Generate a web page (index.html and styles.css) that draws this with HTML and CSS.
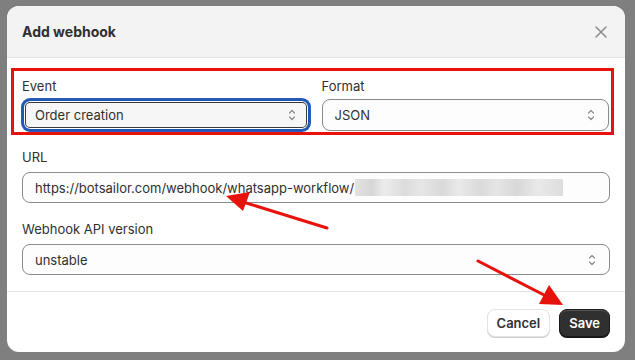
FILE: index.html
```html
<!DOCTYPE html>
<html lang="en">
<head>
    <meta charset="UTF-8">
    <meta name="viewport" content="width=device-width, initial-scale=1.0">
    <title>Add webhook</title>
    <link rel="stylesheet" href="styles.css">
</head>
<body>
    <div class="modal">
        <div class="modal-header">
            <h2>Add webhook</h2>
            <button class="close" aria-label="Close">
                <svg width="14" height="14" viewBox="0 0 14 14"><path d="M2 2 L12 12 M12 2 L2 12" stroke="#8a8a8a" stroke-width="1.5" stroke-linecap="round"/></svg>
            </button>
        </div>

        <div class="modal-body">
            <div class="highlight">
                <div class="field">
                    <label>Event</label>
                    <div class="select focused">
                        <span>Order creation</span>
                        <svg class="chevron" width="10" height="14" viewBox="0 0 10 14"><path d="M2.5 5 L5 2.5 L7.5 5 M2.5 9 L5 11.5 L7.5 9" fill="none" stroke="#8a8a8a" stroke-width="1.2" stroke-linecap="round" stroke-linejoin="round"/></svg>
                    </div>
                </div>
                <div class="field">
                    <label>Format</label>
                    <div class="select">
                        <span>JSON</span>
                        <svg class="chevron" width="10" height="14" viewBox="0 0 10 14"><path d="M2.5 5 L5 2.5 L7.5 5 M2.5 9 L5 11.5 L7.5 9" fill="none" stroke="#8a8a8a" stroke-width="1.2" stroke-linecap="round" stroke-linejoin="round"/></svg>
                    </div>
                </div>
            </div>

            <div class="field url-field">
                <label>URL</label>
                <div class="input">
                    <span>https://botsailor.com/webhook/whatsapp-workflow/</span><span class="blur"></span>
                </div>
            </div>

            <div class="field version-field">
                <label>Webhook API version</label>
                <div class="select">
                    <span>unstable</span>
                    <svg class="chevron" width="10" height="14" viewBox="0 0 10 14"><path d="M2.5 5 L5 2.5 L7.5 5 M2.5 9 L5 11.5 L7.5 9" fill="none" stroke="#8a8a8a" stroke-width="1.2" stroke-linecap="round" stroke-linejoin="round"/></svg>
                </div>
            </div>
        </div>

        <div class="modal-footer">
            <button class="btn">Cancel</button>
            <button class="btn primary">Save</button>
        </div>
    </div>

    <!-- annotation arrows -->
    <svg class="arrows" width="635" height="360" viewBox="0 0 635 360">
        <line x1="327" y1="228" x2="243" y2="202" stroke="#e8120c" stroke-width="3" stroke-linecap="round"/>
        <polygon points="226,196 250,192 243,211" fill="#e8120c"/>
        <line x1="478" y1="261" x2="546" y2="296" stroke="#e8120c" stroke-width="3" stroke-linecap="round"/>
        <polygon points="563,305 539,304 549,285" fill="#e8120c"/>
    </svg>
</body>
</html>
```

FILE: styles.css
```css
body {
    margin: 0;
    background-color: #7f7f7f;
    font-family: Inter, "Noto Sans", sans-serif;
    font-size: 13px;
    color: #303030;
}
.modal {
    margin: 6px 10px 0 7px;
    width: 618px;
    height: 346px;
    background: white;
    border-radius: 12px;
    overflow: hidden;
    display: flex;
    flex-direction: column;
}
.modal-header {
    height: 51px;
    background: #f3f3f3;
    border-bottom: 1px solid #e3e3e3;
    display: flex;
    align-items: center;
    justify-content: space-between;
    padding: 0 17px 0 15px;
}
.modal-header h2 {
    margin: 0;
    font-size: 14px;
    font-weight: 650;
    color: #303030;
}
.close {
    background: none;
    border: none;
    padding: 0;
    display: flex;
}
.modal-body {
    padding: 10px 15px 16px 15px;
    border-bottom: 1px solid #e3e3e3;
}
.highlight {
    margin: 0 -4px 0 -11px;
    padding: 5px 2px 1px 8px;
    border: 3px solid #e8120c;
    display: grid;
    grid-template-columns: 1fr 1fr;
    column-gap: 12px;
}
.field label {
    display: block;
    line-height: 20px;
    margin-bottom: 3px;
}
.select, .input {
    box-sizing: border-box;
    height: 32px;
    border: 1px solid #8a8a8a;
    border-radius: 8px;
    background: #fdfdfd;
    display: flex;
    align-items: center;
    justify-content: space-between;
    padding: 0 12px 0 12px;
}
.select.focused {
    background: #f6f6f6;
    border: 2px solid #1f56b8;
    box-shadow: inset 0 0 0 1px #fff, inset 0 0 0 2px #3a3a3a, 0 0 0 1px #2a5fbf;
    padding-left: 11px;
    padding-right: 11px;
}
.chevron {
    margin-right: 0;
}
.url-field {
    margin-top: 12px;
}
.url-field label, .version-field label {
    margin-bottom: 5px;
}
.url-field .input {
    height: 31px;
    justify-content: flex-start;
}
.blur {
    display: inline-block;
    width: 208px;
    height: 17px;
    margin-left: 1px;
    background: linear-gradient(90deg, #e3e3e3 0%, #d6d6d6 8%, #ececec 14%, #dcdcdc 24%, #e6e6e6 32%, #d9d9d9 42%, #eaeaea 50%, #dadada 60%, #e5e5e5 68%, #d8d8d8 78%, #e9e9e9 88%, #dddddd 100%);
}
.version-field {
    margin-top: 16px;
}
.version-field .select {
    height: 31px;
}
.modal-footer {
    flex: 1;
    display: flex;
    justify-content: flex-end;
    align-items: flex-start;
    gap: 9px;
    padding: 17px 15px 0 0;
}
.btn {
    font-family: Inter, "Noto Sans", sans-serif;
    font-size: 13px;
    font-weight: 600;
    height: 28px;
    padding: 0 9px;
    border-radius: 8px;
    border: 1px solid #e3e3e3;
    background: white;
    color: #303030;
    box-shadow: 0 1px 0 #cfcfcf;
}
.btn.primary {
    background: #303030;
    border-color: #1a1a1a;
    color: white;
    box-shadow: inset 0 1px 0 #555, 0 1px 0 #111;
}
.arrows {
    position: absolute;
    top: 0;
    left: 0;
    pointer-events: none;
}
```
